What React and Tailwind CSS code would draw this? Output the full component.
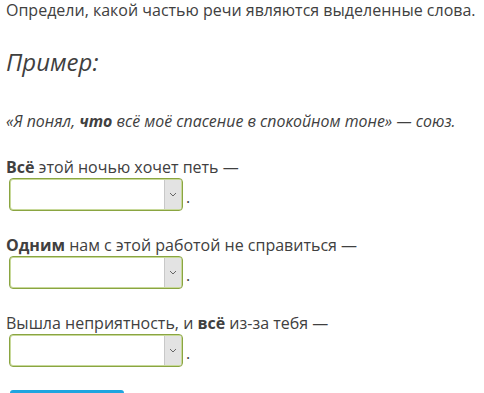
import React from "react";

function Select() {
  return (
    <div className="flex items-end gap-[3px] pl-[9px]">
      <div className="flex h-[33px] w-[174px] overflow-hidden rounded-[4px] border border-[#8aa541] bg-white shadow-[inset_0_0_0_1px_#c8d99a]">
        <div className="flex-1" />
        <div className="my-[1px] mr-[1px] flex w-[17px] items-center justify-center border-l border-[#c8c8c8] bg-[#e3e3e3]">
          <svg width="8" height="5" viewBox="0 0 8 5" fill="none">
            <path d="M1 1 L4 4 L7 1" stroke="#666" strokeWidth="1" />
          </svg>
        </div>
      </div>
      <span className="pb-[6px] leading-none">.</span>
    </div>
  );
}

export default function App() {
  return (
    <div className="h-[393px] w-[484px] overflow-hidden bg-white text-[16px] text-[#404040]" style={{ fontFamily: '"Open Sans", sans-serif' }}>
      <div className="-mt-[1px] pl-[6px] leading-[22px]">Определи, какой частью речи являются выделенные слова.</div>
      <div className="mt-[26px] pl-[6px] text-[24px] italic leading-[30px]">Пример:</div>
      <div className="mt-[33px] pl-[6px] text-[15.9px] italic leading-[22px]">«Я понял, <b>что</b> всё моё спасение в спокойном тоне» — союз.</div>
      <div className="mt-[24px] flex flex-col gap-[23px]">
        <div>
          <div className="pl-[6px] leading-[22px]"><b>Всё</b> этой ночью хочет петь —</div>
          <Select />
        </div>
        <div>
          <div className="pl-[6px] leading-[22px]"><b>Одним</b> нам с этой работой не справиться —</div>
          <Select />
        </div>
        <div>
          <div className="pl-[6px] leading-[22px]">Вышла неприятность, и <b>всё</b> из-за тебя —</div>
          <Select />
        </div>
      </div>
      <div className="ml-[10px] mt-[23px] h-[30px] w-[114px] rounded-[3px] bg-[#1ea5e0]" />
    </div>
  );
}
